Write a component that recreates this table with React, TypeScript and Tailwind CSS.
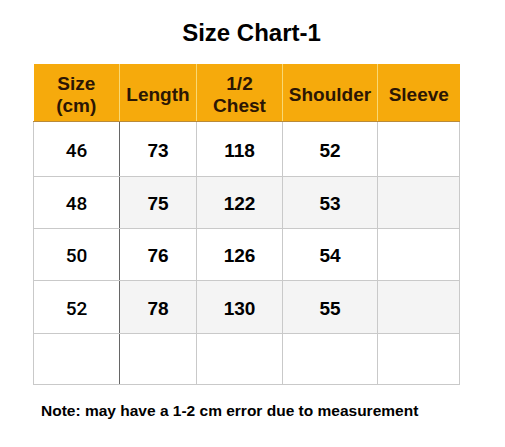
import React from "react";

const rows = [
  { size: "46", length: "73", chest: "118", shoulder: "52" },
  { size: "48", length: "75", chest: "122", shoulder: "53" },
  { size: "50", length: "76", chest: "126", shoulder: "54" },
  { size: "52", length: "78", chest: "130", shoulder: "55" },
];

const rowHeights = ["h-[55px]", "h-[52px]", "h-[52px]", "h-[53px]"];

const App: React.FC = () => {
  return (
    <div className="h-[447px] w-[505px] bg-white font-['Liberation_Sans',Arial,sans-serif] text-black">
      <h1 className="pt-[19px] text-center text-[24px] font-bold leading-[28px] pr-[2px]">Size Chart-1</h1>
      <table className="ml-[33px] mt-[17px] w-[426px] table-fixed border-collapse text-center font-bold">
        <colgroup>
          <col className="w-[86px]" />
          <col className="w-[77px]" />
          <col className="w-[86px]" />
          <col className="w-[95px]" />
          <col className="w-[82px]" />
        </colgroup>
        <thead>
          <tr className="h-[57px] bg-[#f6aa0c] text-[19px] leading-[22px] text-[#2b1604]">
            <th className="border-r border-b border-r-[#f9d873] border-b-[#b98a3a] pt-[6px]">Size<br />(cm)</th>
            <th className="border-r border-b border-r-[#f9d873] border-b-[#b98a3a] pt-[6px]">Length</th>
            <th className="border-r border-b border-r-[#f9d873] border-b-[#b98a3a] pt-[6px]">1/2<br />Chest</th>
            <th className="border-r border-b border-r-[#f9d873] border-b-[#b98a3a] pt-[6px]">Shoulder</th>
            <th className="border-b border-b-[#b98a3a] pt-[6px]">Sleeve</th>
          </tr>
        </thead>
        <tbody className="text-[19px] leading-[22px]">
          {rows.map((r, i) => (
            <tr key={r.size} className={`${rowHeights[i]} ${i % 2 === 1 ? "bg-[#f4f4f4]" : "bg-white"}`}>
              <td className="border border-[#c9c9c9] border-r-[#666666] bg-white pt-[4px] font-['Roboto',sans-serif] text-[19px] font-medium">{r.size}</td>
              <td className="border border-[#c9c9c9] border-l-[#666666] pt-[4px]">{r.length}</td>
              <td className="border border-[#c9c9c9] pt-[4px]">{r.chest}</td>
              <td className="border border-[#c9c9c9] pt-[4px]">{r.shoulder}</td>
              <td className="border border-[#c9c9c9]"></td>
            </tr>
          ))}
          <tr className="h-[51px] bg-white">
            <td className="border border-[#c9c9c9] border-r-[#666666]"></td>
            <td className="border border-[#c9c9c9] border-l-[#666666]"></td>
            <td className="border border-[#c9c9c9]"></td>
            <td className="border border-[#c9c9c9]"></td>
            <td className="border border-[#c9c9c9]"></td>
          </tr>
        </tbody>
      </table>
      <p className="ml-[41px] mt-[17px] text-[15.5px] font-bold leading-[18px]">
        Note: may have a 1-2 cm error due to measurement
      </p>
    </div>
  );
};

export default App;
